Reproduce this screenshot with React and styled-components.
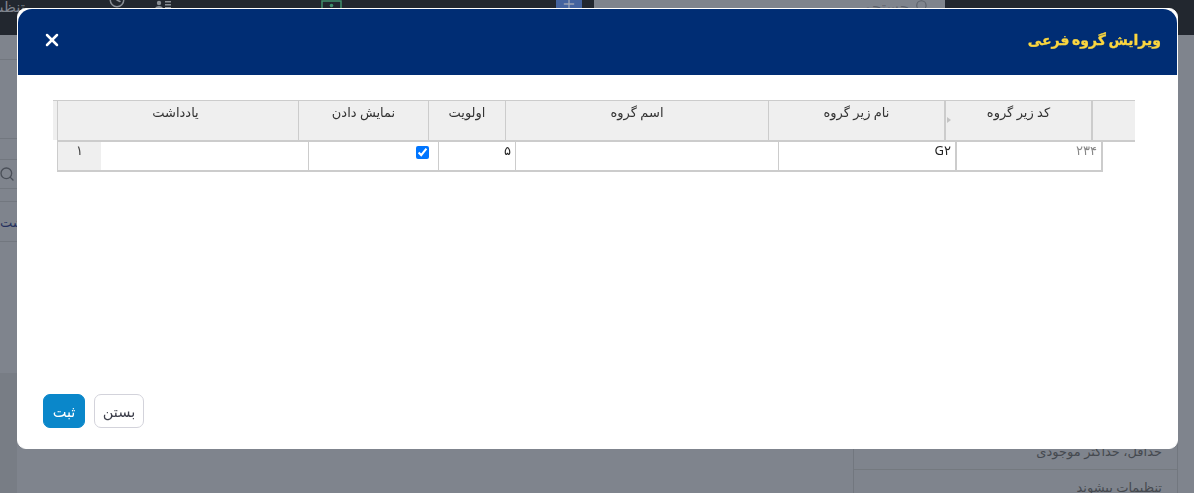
import React from "react";
import styled, { createGlobalStyle } from "styled-components";
import { Search, Plus, X, History } from "lucide-react";

const Global = createGlobalStyle`
  html, body { margin: 0; padding: 0; height: 100%; overflow: hidden; background: #7f848d; }
  body { font-family: "Noto Sans", "DejaVu Sans", sans-serif; }
  * { box-sizing: border-box; }
`;

const Page = styled.div`
  width: 1194px;
  height: 493px;
  overflow: hidden;
  display: flex;
  flex-direction: column;
  background: #7f848d;
`;

const TopBar = styled.div`
  height: 35px;
  flex: none;
  display: flex;
  align-items: flex-start;
  background: #22272f;
  overflow: hidden;
`;

const BarText = styled.span`
  width: 25px;
  flex: none;
  overflow: hidden;
  font-size: 15px;
  line-height: 12px;
  white-space: nowrap;
  direction: rtl;
  color: #7f848d;
`;

const BarIcon = styled.span`
  display: flex;
  flex: none;
  margin-left: ${p => p.$gap}px;
  margin-top: ${p => p.$top}px;
  color: ${p => p.$color || "#8a8f96"};
`;

const PlusButton = styled.span`
  width: 26px;
  height: 24px;
  flex: none;
  margin-left: 214px;
  margin-top: -8px;
  border-radius: 4px;
  background: #44639f;
  color: #9aa3b5;
  display: flex;
  align-items: center;
  justify-content: center;
`;

const SearchBar = styled.div`
  width: 351px;
  height: 8px;
  flex: none;
  margin-left: 12px;
  background: #7f848d;
  overflow: hidden;
  color: #5c616a;
`;

const SearchInner = styled.div`
  display: flex;
  align-items: center;
  gap: 6px;
  justify-content: flex-end;
  margin-top: -4px;
  padding-right: 16px;
  font-size: 15px;
  line-height: 20px;
  direction: ltr;
`;

const Main = styled.div`
  flex: 1;
  display: flex;
  justify-content: space-between;
`;

const LeftRail = styled.div`
  width: 17px;
  display: flex;
  flex-direction: column;
  overflow: hidden;
`;

const RailRow = styled.div`
  height: ${p => p.$h}px;
  flex: none;
  border-bottom: ${p => (p.$plain ? "none" : "1px solid #72777f")};
  background: ${p => p.$bg || "transparent"};
  display: flex;
  align-items: center;
  color: #4a4f58;
  & > svg { flex: none; margin-left: -1px; }
`;

const RailLabel = styled.span`
  font-size: 13px;
  white-space: nowrap;
  direction: rtl;
  color: #24305e;
  flex: none;
`;

const SidePanel = styled.div`
  width: 325px;
  margin-right: 16px;
  margin-top: 400px;
  border-left: 1px solid #72777f;
  border-right: 1px solid #72777f;
  display: flex;
  flex-direction: column;
  direction: rtl;
  color: #45494f;
  font-size: 13px;
  line-height: 20px;
`;

const SideItem = styled.div`
  height: ${p => p.$h}px;
  flex: none;
  padding-right: 15px;
  display: flex;
  align-items: flex-end;
  padding-bottom: ${p => p.$pb}px;
  border-bottom: 1px solid #74797f;
  white-space: nowrap;
`;

const Modal = styled.div`
  position: fixed;
  top: 8px;
  left: 17px;
  width: 1161px;
  height: 441px;
  background: #fff;
  border: 1px solid #fff;
  border-radius: 9px;
  display: flex;
  flex-direction: column;
  overflow: hidden;
`;

const Header = styled.div`
  height: 66px;
  flex: none;
  background: #002d74;
  border-radius: 14px 14px 0 0;
  display: flex;
  align-items: center;
  justify-content: space-between;
  padding: 0 16px 4px 24px;
`;

const CloseButton = styled.span`
  display: flex;
  color: #fff;
`;

const Title = styled.h1`
  margin: 0;
  direction: rtl;
  font-size: 14px;
  font-weight: 700;
  word-spacing: -1px;
  color: #fbd63f;
  -webkit-text-stroke: 0.3px #fbd63f;
  line-height: 24px;
`;

const Body = styled.div`
  flex: 1;
  padding: 25px 42px 0 35px;
`;

const Table = styled.div`
  display: flex;
  flex-direction: column;
  direction: rtl;
  font-size: 13px;
  color: #333;
`;

const HeadRow = styled.div`
  display: flex;
  height: 42px;
`;

const HeadCell = styled.div`
  position: relative;
  width: ${p => p.$w}px;
  flex: none;
  background: #efefef;
  border-top: 1px solid #ccc;
  border-bottom: 2px solid #ccc;
  border-left: 1px solid #ccc;
  text-align: center;
  padding-top: 1px;
  line-height: 20px;
`;

const EdgeCell = styled(HeadCell)`
  border-left: 2px solid #ccc;
`;

const NoteHead = styled(HeadCell)`
  padding-right: 5px;
`;

const Band = styled.div`
  width: 4px;
  flex: none;
  background: #efefef;
  border-top: 1px solid #ccc;
  height: 40px;
`;

const SortMark = styled.i`
  position: absolute;
  left: 1px;
  top: 16px;
  border-style: solid;
  border-width: 3px 0 3px 4px;
  border-color: transparent transparent transparent #c4c4c4;
`;

const DataRow = styled.div`
  display: flex;
  height: 30px;
  margin-right: 32px;
  margin-left: 4px;
  border-right: 2px solid #ccc;
  border-bottom: 2px solid #ccc;
`;

const DataCell = styled.div`
  width: ${p => p.$w}px;
  flex: none;
  border-left: ${p => (p.$thick ? 2 : 1)}px solid #ccc;
  padding: 0 4px;
  line-height: 17px;
  color: ${p => (p.$muted ? "#888" : "#222")};
`;

const NoteCell = styled(DataCell)`
  border-left: none;
`;

const CheckCell = styled(DataCell)`
  padding: 4px 9px 0 0;
`;

const Check = styled.input`
  margin: 0;
  width: 13px;
  height: 13px;
  display: block;
`;

const IndexCell = styled.div`
  flex: 1;
  background: #efefef;
  border-left: 1px solid #ccc;
  text-align: center;
  line-height: 17px;
  color: #444;
`;

const Footer = styled.div`
  flex: none;
  height: 55px;
  padding: 1px 0 0 25px;
  display: flex;
  gap: 9px;
`;

const Button = styled.button`
  height: 34px;
  border-radius: 7px;
  font: inherit;
  font-size: 14.5px;
  padding: 0;
  direction: rtl;
  cursor: pointer;
`;

const PrimaryButton = styled(Button)`
  width: 42px;
  background: #0a87ca;
  border: 1px solid #0a87ca;
  color: #fff;
`;

const GhostButton = styled(Button)`
  width: 50px;
  background: #fff;
  border: 1px solid #d3d3db;
  color: #3d3f4b;
`;

const CardIcon = () => (
  <svg width="16" height="18" viewBox="0 0 16 18" fill="currentColor">
    <circle cx="4" cy="3" r="2.2" />
    <path d="M0 9c0-2 1.800-3 4-3s4 1 4 3v1H0z" />
    <rect x="10" y="1" width="6" height="1.500" />
    <rect x="10" y="4" width="6" height="1.500" />
    <rect x="10" y="7" width="6" height="1.500" />
  </svg>
);

const CashIcon = () => (
  <svg width="21" height="18" viewBox="0 0 21 18" fill="none" stroke="currentColor" strokeWidth="1.500">
    <rect x="1" y="1" width="19" height="16" />
    <circle cx="10.500" cy="5.500" r="1.800" fill="currentColor" stroke="none" />
  </svg>
);

const noop = () => {};

export default function App() {
  return (
    <Page>
      <Global />
      <TopBar>
        <BarText>تنظیمات</BarText>
        <BarIcon $gap={83} $top={-9}><History size={18} /></BarIcon>
        <BarIcon $gap={29} $top={0}><CardIcon /></BarIcon>
        <BarIcon $gap={150} $top={0} $color="#3f8f6c"><CashIcon /></BarIcon>
        <PlusButton><Plus size={16} /></PlusButton>
        <SearchBar>
          <SearchInner>
            <span dir="rtl">جستجو...</span>
            <Search size={14} />
          </SearchInner>
        </SearchBar>
      </TopBar>
      <Main>
        <LeftRail>
          <RailRow $h={25} />
          <RailRow $h={79} />
          <RailRow $h={21} />
          <RailRow $h={29}><Search size={16} /></RailRow>
          <RailRow $h={13} />
          <RailRow $h={40}><RailLabel>یادداشت</RailLabel></RailRow>
          <RailRow $h={131} $plain />
          <RailRow $h={120} $plain $bg="#787d85" />
        </LeftRail>
        <SidePanel>
          <SideItem $h={35} $pb={8}>حداقل، حداکثر موجودی</SideItem>
          <SideItem $h={40} $pb={12}>تنظیمات پیشوند</SideItem>
        </SidePanel>
      </Main>
      <Modal>
        <Header>
          <CloseButton><X size={20} strokeWidth={3} /></CloseButton>
          <Title>ویرایش گروه فرعی</Title>
        </Header>
        <Body>
          <Table>
            <HeadRow>
              <EdgeCell $w={44} />
              <EdgeCell $w={147}>
                کد زیر گروه
                <SortMark />
              </EdgeCell>
              <HeadCell $w={176}>نام زیر گروه</HeadCell>
              <HeadCell $w={263}>اسم گروه</HeadCell>
              <HeadCell $w={77}>اولویت</HeadCell>
              <HeadCell $w={130}>نمایش دادن</HeadCell>
              <NoteHead $w={241}>یادداشت</NoteHead>
              <Band />
            </HeadRow>
            <DataRow>
              <DataCell $w={146} $thick $muted>۲۳۴</DataCell>
              <DataCell $w={177}>G۲</DataCell>
              <DataCell $w={263} />
              <DataCell $w={77}>۵</DataCell>
              <CheckCell $w={130}>
                <Check type="checkbox" checked onChange={noop} />
              </CheckCell>
              <NoteCell $w={207} />
              <IndexCell>۱</IndexCell>
            </DataRow>
          </Table>
        </Body>
        <Footer>
          <PrimaryButton>ثبت</PrimaryButton>
          <GhostButton>بستن</GhostButton>
        </Footer>
      </Modal>
    </Page>
  );
}
